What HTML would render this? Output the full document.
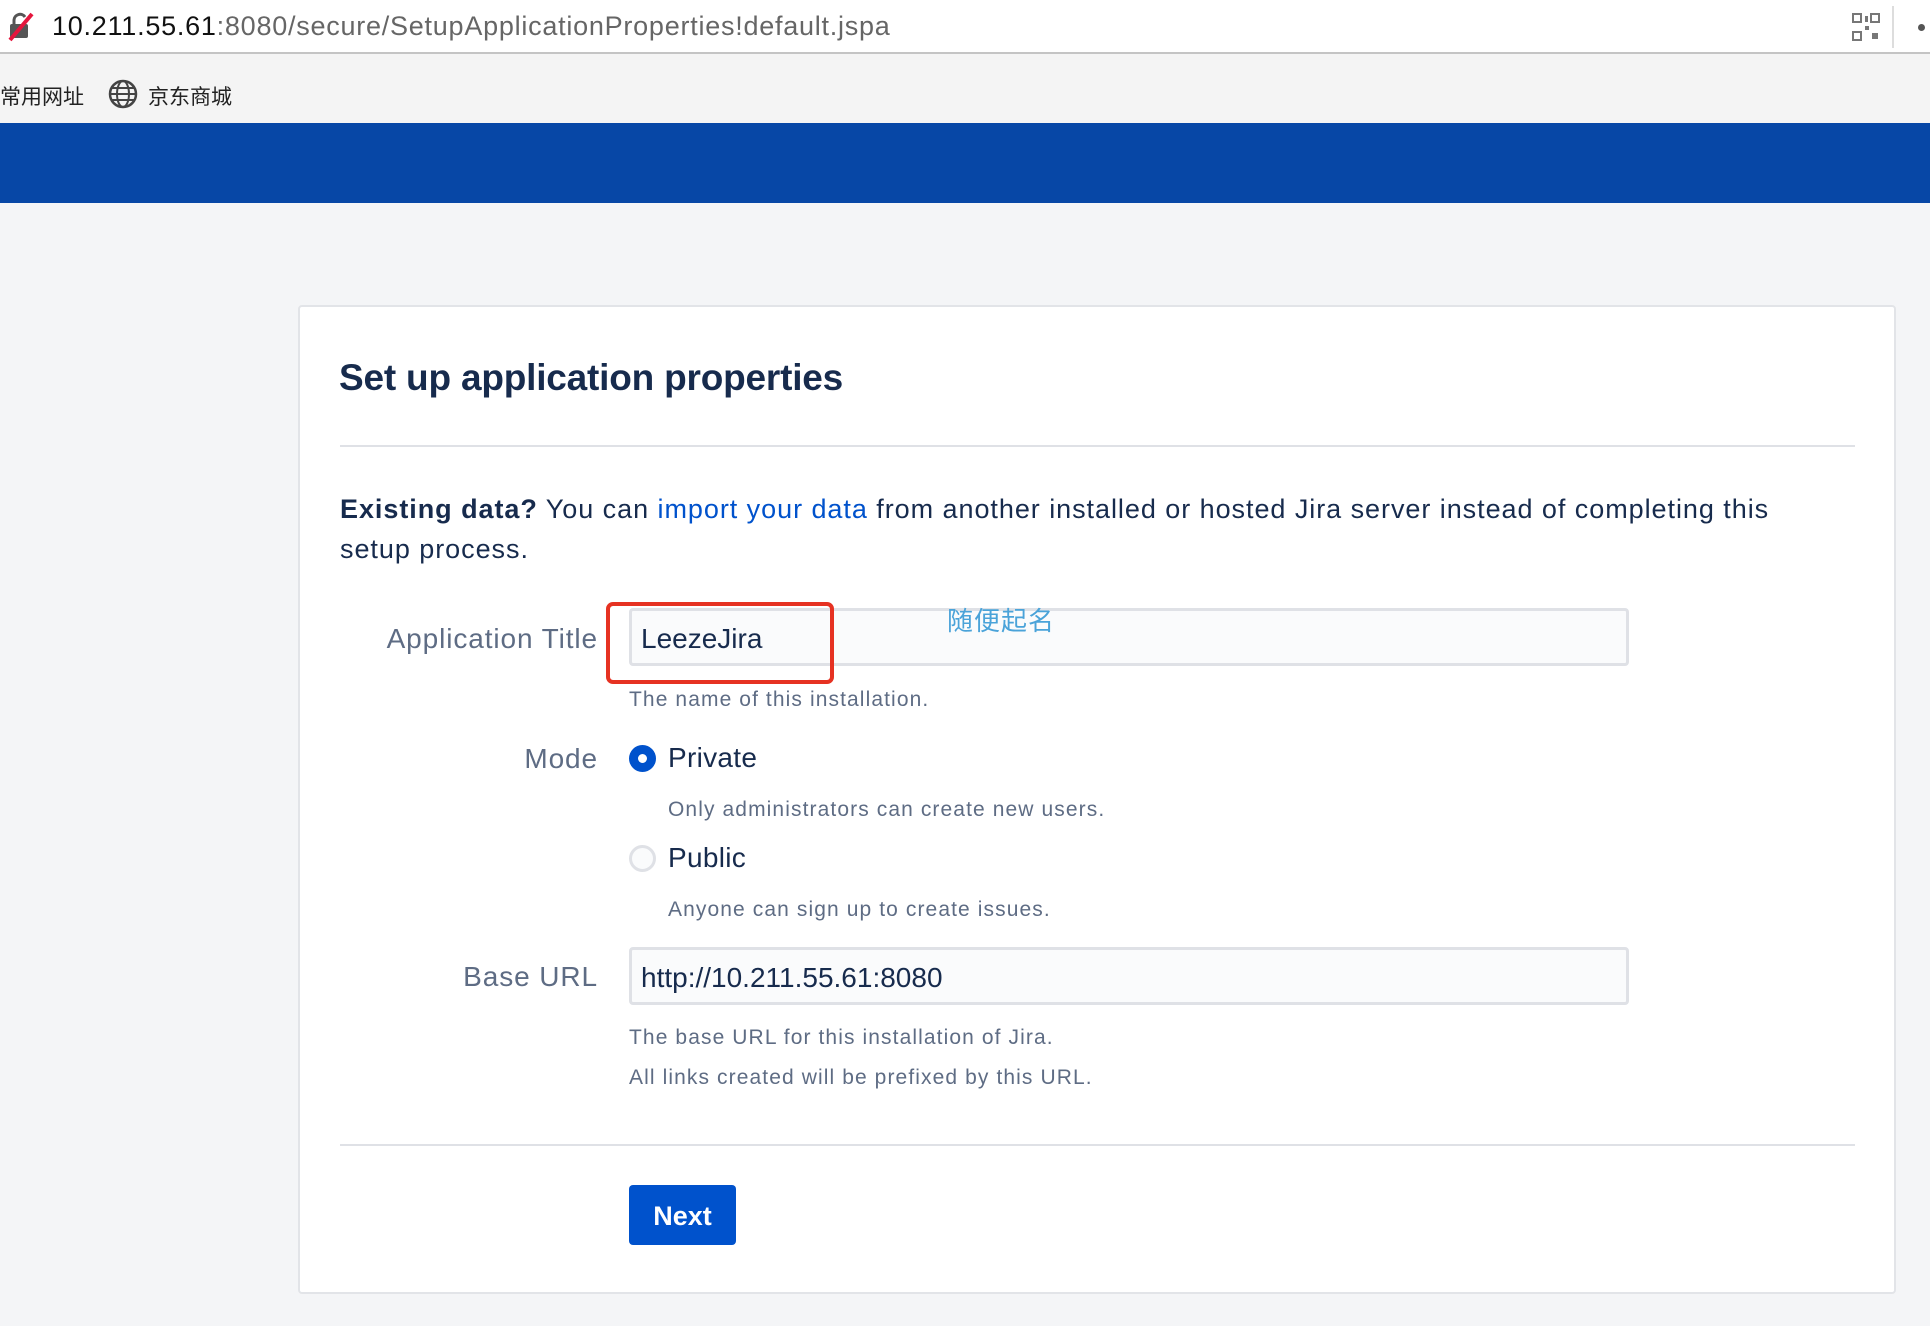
<!DOCTYPE html>
<html><head><meta charset="utf-8">
<style>
*{margin:0;padding:0;box-sizing:border-box}
body{width:1930px;height:1326px;overflow:hidden;background:#f4f5f7;font-family:"Liberation Sans","Noto Sans CJK SC",sans-serif;position:relative}
.abs{position:absolute;white-space:nowrap}
#addr{left:0;top:0;width:1930px;height:54px;background:#fff;border-bottom:2px solid #c4c4c4}
#bm{left:0;top:54px;width:1930px;height:69px;background:#f4f4f4}
#blue{left:0;top:123px;width:1930px;height:80px;background:#0747a6}
#card{left:298px;top:305px;width:1598px;height:989px;background:#fff;border:2px solid #e2e4e8;border-radius:4px}
.lab{color:#5e6c84;font-size:28px;text-align:right;width:300px;letter-spacing:.9px}
.help{color:#5e6c84;font-size:21px;letter-spacing:1.1px}
.inp{background:#fafbfc;border:3px solid #dfe1e6;border-radius:4px;width:1000px;height:58px;font-size:28px;color:#172b4d;padding:12px 9px}
.hr{height:2px;background:#dfe1e6;left:340px;width:1515px}
.opt{font-size:28px;color:#172b4d;letter-spacing:.3px}
</style></head><body>
<div id="addr" class="abs"></div>
<svg class="abs" style="left:6px;top:12px" width="30" height="30" viewBox="0 0 30 30"><rect x="4" y="12" width="18" height="14" fill="#555" rx="2"/><path d="M8 12V8a6 6 0 0 1 11-3" stroke="#555" stroke-width="3" fill="none"/><path d="M4 28L26 2" stroke="#e5163d" stroke-width="4"/></svg>
<div class="abs" style="left:52px;top:11px;font-size:27px;color:#111;letter-spacing:.75px">10.211.55.61<span style="color:#666">:8080/secure/SetupApplicationProperties!default.jspa</span></div>
<svg class="abs" style="left:1852px;top:13px" width="28" height="28"><g fill="#777"><rect x="0" y="0" width="10" height="10"/><rect x="18" y="0" width="10" height="10"/><rect x="0" y="18" width="10" height="10"/><rect x="13" y="13" width="4" height="4"/><rect x="20" y="20" width="6" height="6"/><rect x="13" y="3" width="3" height="6"/></g><g fill="#fff"><rect x="2" y="2" width="6" height="6"/><rect x="20" y="2" width="6" height="6"/><rect x="2" y="20" width="6" height="6"/></g></svg>
<div class="abs" style="left:1892px;top:6px;width:2px;height:42px;background:#ddd"></div>
<div class="abs" style="left:1918px;top:24px;width:7px;height:7px;border-radius:50%;background:#555"></div>
<div id="bm" class="abs"></div>
<div class="abs" style="left:0;top:81px;font-size:21px;color:#222">常用网址</div>
<svg class="abs" style="left:108px;top:79px" width="30" height="30" viewBox="0 0 30 30"><circle cx="15" cy="15" r="13" fill="none" stroke="#444" stroke-width="2.5"/><ellipse cx="15" cy="15" rx="6" ry="13" fill="none" stroke="#444" stroke-width="2"/><path d="M2 15h26M4 9h22M4 21h22" stroke="#444" stroke-width="2"/></svg>
<div class="abs" style="left:148px;top:81px;font-size:21px;color:#222">京东商城</div>
<div id="blue" class="abs"></div>
<div id="card" class="abs"></div>
<div class="abs" style="left:339px;top:357px;font-size:37px;font-weight:bold;color:#172b4d;letter-spacing:-.2px">Set up application properties</div>
<div class="abs hr" style="top:445px"></div>
<div class="abs" style="left:340px;top:489px;font-size:27px;color:#172b4d;line-height:40px;letter-spacing:.95px"><b>Existing data?</b> You can <span style="color:#0052cc">import your data</span> from another installed or hosted Jira server instead of completing this<br>setup process.</div>
<div class="abs lab" style="left:298px;top:623px">Application Title</div>
<div class="abs inp" style="left:629px;top:608px">LeezeJira</div>
<div class="abs" style="left:606px;top:602px;width:228px;height:82px;border:4px solid #e63222;border-radius:7px"></div>
<div class="abs" style="left:947px;top:601px;font-size:26px;color:#4aa3d9;letter-spacing:1px">随便起名</div>
<div class="abs help" style="left:629px;top:688px">The name of this installation.</div>
<div class="abs lab" style="left:298px;top:743px">Mode</div>
<div class="abs" style="left:629px;top:745px;width:27px;height:27px;border-radius:50%;background:#0052cc"></div>
<div class="abs" style="left:638px;top:754px;width:9px;height:9px;border-radius:50%;background:#fff"></div>
<div class="abs opt" style="left:668px;top:742px">Private</div>
<div class="abs help" style="left:668px;top:798px">Only administrators can create new users.</div>
<div class="abs" style="left:629px;top:845px;width:27px;height:27px;border-radius:50%;background:#fafbfc;border:3px solid #dfe1e6"></div>
<div class="abs opt" style="left:668px;top:842px">Public</div>
<div class="abs help" style="left:668px;top:898px">Anyone can sign up to create issues.</div>
<div class="abs lab" style="left:298px;top:961px">Base URL</div>
<div class="abs inp" style="left:629px;top:947px">http://10.211.55.61:8080</div>
<div class="abs help" style="left:629px;top:1026px">The base URL for this installation of Jira.</div>
<div class="abs help" style="left:629px;top:1066px">All links created will be prefixed by this URL.</div>
<div class="abs hr" style="top:1144px"></div>
<div class="abs" style="left:629px;top:1185px;width:107px;height:60px;background:#0052cc;border-radius:4px;color:#fff;font-size:27px;font-weight:bold;text-align:center;line-height:62px">Next</div>
</body></html>
